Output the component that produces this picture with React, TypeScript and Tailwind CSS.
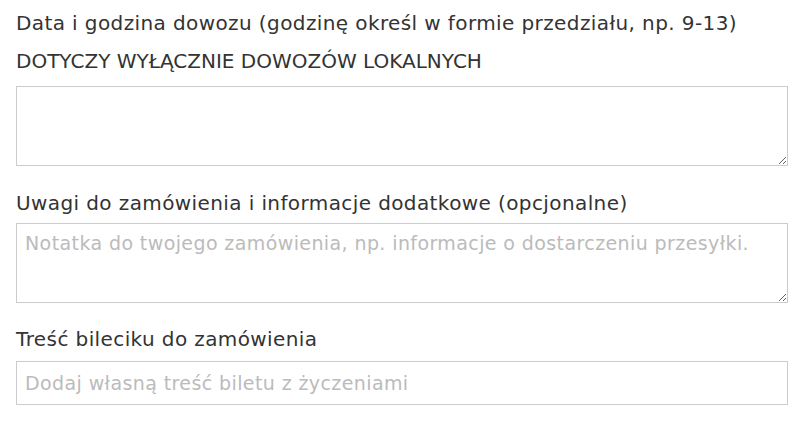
const font = { fontFamily: '"DejaVu Sans", "Liberation Sans", sans-serif' };

function Label({ children }: { children: React.ReactNode }) {
  return <label className="block text-[20px] leading-[30px] tracking-[0.4px] text-[#333333]">{children}</label>;
}

export default function App() {
  return (
    <div className="min-h-[430px] bg-white pl-4 pt-[8px]" style={font}>
      <form className="flex w-[772px] flex-col">
        <Label>Data i godzina dowozu (godzinę określ w formie przedziału, np. 9-13)</Label>
        <p className="mt-[8px] text-[20px] leading-[30px] text-[#333333]">DOTYCZY WYŁĄCZNIE DOWOZÓW LOKALNYCH</p>
        <textarea className="mt-[10px] h-[80px] w-full border border-[#cccccc] px-2 py-2 text-[19px] outline-none" />

        <div className="mt-[22px]">
          <Label>Uwagi do zamówienia i informacje dodatkowe (opcjonalne)</Label>
        </div>
        <textarea
          className="mt-[5px] h-[80px] w-full border border-[#cccccc] px-2 py-[6px] text-[19px] leading-[26px] tracking-[0.4px] text-[#333333] outline-none placeholder:text-[#bbbbbb]"
          placeholder="Notatka do twojego zamówienia, np. informacje o dostarczeniu przesyłki."
        />

        <div className="mt-[21px]">
          <Label>Treść bileciku do zamówienia</Label>
        </div>
        <input
          type="text"
          className="mt-[7px] h-[44px] w-full border border-[#cccccc] px-2 text-[19px] tracking-[0.4px] text-[#333333] outline-none placeholder:text-[#bbbbbb]"
          placeholder="Dodaj własną treść biletu z życzeniami"
        />
      </form>
    </div>
  );
}
